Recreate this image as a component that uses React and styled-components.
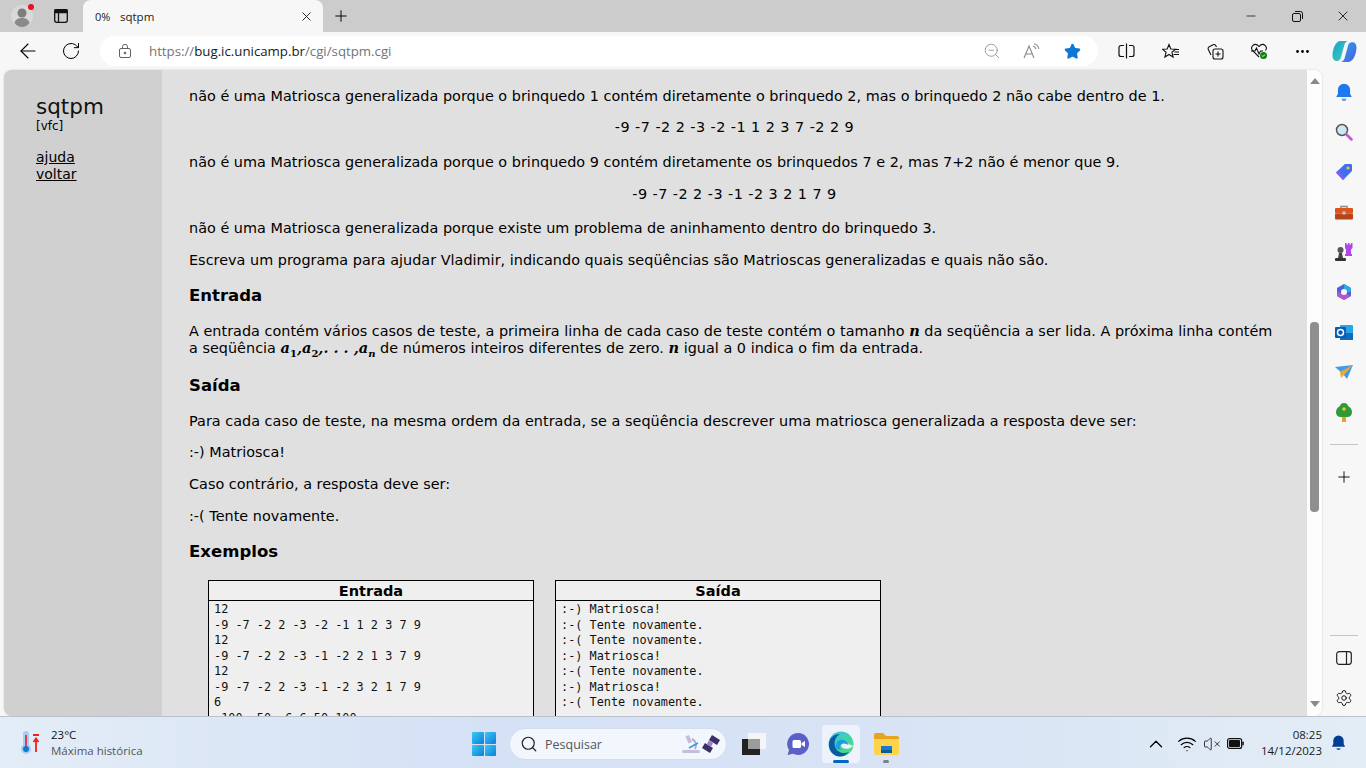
import React from "react";
import styled, { createGlobalStyle } from "styled-components";
import {
  ArrowLeft,
  RotateCw,
  Minus,
  X,
  Plus,
  ZoomOut,
  Star,
  MoreHorizontal,
  Search,
  ChevronUp,
  Wifi,
  VolumeX,
  Settings,
} from "lucide-react";

const GlobalStyle = createGlobalStyle`
  html, body {
    margin: 0;
    padding: 0;
    width: 1366px;
    height: 768px;
    overflow: hidden;
    background: #f7f7f7;
  }
  * { box-sizing: border-box; }
`;

const Screen = styled.div`
  width: 1366px;
  height: 768px;
  display: flex;
  flex-direction: column;
  font-family: "DejaVu Sans", Verdana, sans-serif;
  color: #000;
`;

const TitleBar = styled.div`
  height: 32px;
  flex: none;
  background: #cccccc;
  display: flex;
  align-items: flex-end;
  font-family: "Open Sans", "Noto Sans", sans-serif;
`;

const Avatar = styled.div`
  width: 44px;
  height: 32px;
  flex: none;
  position: relative;
  display: flex;
  align-items: center;
  padding-left: 11px;
`;

const RedDot = styled.span`
  position: absolute;
  top: 4px;
  left: 28px;
  width: 6px;
  height: 6px;
  border-radius: 50%;
  background: #e81123;
`;

const TabStrip = styled.div`
  width: 39px;
  height: 32px;
  flex: none;
  display: flex;
  align-items: center;
  padding-left: 9px;
`;

const Tab = styled.div`
  width: 240px;
  height: 32px;
  flex: none;
  background: #f7f7f7;
  border-radius: 8px 8px 0 0;
  display: flex;
  align-items: center;
  padding: 0 9px 0 12px;
  color: #222;
`;

const TabPercent = styled.span`
  width: 25px;
  font-size: 11px;
  flex: none;
`;

const TabTitle = styled.span`
  flex: 1;
  font-size: 11.5px;
`;

const NewTab = styled.div`
  width: 36px;
  height: 32px;
  display: flex;
  align-items: center;
  justify-content: center;
  flex: none;
`;

const WindowControls = styled.div`
  margin-left: auto;
  height: 32px;
  display: flex;
  align-items: center;
`;

const WindowButton = styled.div`
  width: 46px;
  height: 32px;
  display: flex;
  align-items: center;
  justify-content: center;
`;

const Toolbar = styled.div`
  height: 38px;
  flex: none;
  background: #f7f7f7;
  display: flex;
  align-items: center;
  padding-left: 10px;
  font-family: "Open Sans", "Noto Sans", sans-serif;
`;

const ToolButton = styled.div`
  width: ${(p) => p.$w || 44}px;
  height: 32px;
  flex: none;
  display: flex;
  align-items: center;
  justify-content: center;
`;

const AddressBar = styled.div`
  width: 998px;
  height: 30px;
  margin-left: 4px;
  margin-right: 5px;
  flex: none;
  background: #fff;
  border-radius: 15px;
  display: flex;
  align-items: center;
  padding-left: 18px;
  padding-right: 6px;
`;

const Url = styled.div`
  margin-left: 17px;
  flex: 1;
  font-size: 13.25px;
  color: #70757a;
  white-space: nowrap;
`;

const UrlHost = styled.span`
  color: #1a1a1a;
`;

const Body = styled.div`
  flex: 1;
  min-height: 0;
  display: flex;
  background: #f7f7f7;
`;

const Page = styled.div`
  width: 1318px;
  margin-left: 4px;
  flex: none;
  display: flex;
  overflow: hidden;
  border-radius: 8px;
  box-shadow: 0 0 2px rgba(0, 0, 0, 0.2);
`;

const Side = styled.nav`
  width: 158px;
  flex: none;
  background: #d0d0d0;
  padding: 24px 0 0 32px;
`;

const Brand = styled.div`
  font-size: 21.5px;
  line-height: 25px;
  color: #111;
`;

const Version = styled.div`
  font-size: 12px;
  line-height: 14px;
  margin-bottom: 16px;
`;

const SideLink = styled.a`
  display: block;
  color: #000;
  text-decoration: underline;
  font-size: 14px;
  line-height: 17px;
`;

const Main = styled.main`
  flex: 1;
  min-width: 0;
  background: #e0e0e0;
  padding: 17.5px 27px 0 27px;
  overflow: hidden;
  font-size: 14.4px;
  line-height: 17.3px;
  letter-spacing: 0.02px;
`;

const Para = styled.p`
  margin: 0 0 ${(p) => (p.$tall ? 16.4 : 14.4)}px;
`;

const Centered = styled.p`
  margin: 0 0 17.4px;
  text-align: center;
  letter-spacing: 0.45px;
`;

const Heading = styled.h3`
  margin: 0 0 16.6px;
  padding-top: 2.5px;
  font-size: 16.5px;
  line-height: 20px;
  font-weight: 700;
`;

const MathText = styled.span`
  font-family: "DejaVu Serif", "Liberation Serif", serif;
  font-style: italic;
  font-weight: 700;
  font-size: 14.5px;
  line-height: 0;
  letter-spacing: 0;
  sub {
    font-size: 10px;
    line-height: 0;
  }
`;

const DigitSub = styled.sub`
  font-style: normal;
`;

const Samples = styled.div`
  display: flex;
  gap: 21px;
  padding: 1.2px 0 0 19px;
  letter-spacing: 0;
`;

const SampleBox = styled.div`
  width: 326px;
  height: 200px;
  flex: none;
  border: 1px solid #000;
  background: #efefef;
`;

const SampleHead = styled.div`
  height: 20px;
  border-bottom: 1px solid #000;
  text-align: center;
  font-weight: 700;
  font-size: 14.5px;
  line-height: 20px;
`;

const SampleBody = styled.pre`
  margin: 0;
  padding: 1.5px 5px 0;
  font-family: "DejaVu Sans Mono", monospace;
  font-size: 11.85px;
  line-height: 15.5px;
  color: #111;
`;

const Scrollbar = styled.div`
  width: 15px;
  flex: none;
  background: #fdfdfd;
  display: flex;
  flex-direction: column;
  align-items: center;
  padding-top: 8px;
`;

const ArrowUp = styled.div`
  width: 0;
  height: 0;
  border-left: 5px solid transparent;
  border-right: 5px solid transparent;
  border-bottom: 6px solid #8a8a8a;
`;

const ArrowDown = styled.div`
  width: 0;
  height: 0;
  margin-top: 189px;
  border-left: 5px solid transparent;
  border-right: 5px solid transparent;
  border-top: 6px solid #8a8a8a;
`;

const Thumb = styled.div`
  width: 9px;
  height: 190px;
  margin-top: 238px;
  background: #8f8f8f;
  border-radius: 4px;
`;

const Rail = styled.aside`
  flex: 1;
  display: flex;
  flex-direction: column;
  align-items: center;
  padding-top: 2px;
`;

const RailSlot = styled.div`
  width: 100%;
  height: 40px;
  flex: none;
  display: flex;
  align-items: center;
  justify-content: center;
`;

const RailRule = styled.div`
  width: 28px;
  height: 1px;
  background: #c4c4c4;
  flex: none;
  margin-top: ${(p) => p.$top}px;
  margin-bottom: ${(p) => p.$bottom}px;
`;

const Taskbar = styled.footer`
  height: 52px;
  flex: none;
  background: linear-gradient(90deg, #e3edf7 0%, #d5e1f5 35%, #d8e3f5 65%, #e2edf6 100%);
  border-top: 1px solid #b9c2cc;
  display: flex;
  align-items: center;
  font-family: "Open Sans", "Noto Sans", sans-serif;
`;

const Weather = styled.div`
  width: 470px;
  flex: none;
  display: flex;
  align-items: center;
  padding-left: 20px;
  gap: 11px;
`;

const WeatherText = styled.div`
  font-size: 11.5px;
  line-height: 16px;
  color: #111;
`;

const WeatherSub = styled.div`
  color: #555;
`;

const Dock = styled.div`
  display: flex;
  align-items: center;
  padding-top: 3px;
`;

const StartIcon = styled.div`
  width: 24px;
  height: 24px;
  margin-left: 2px;
  flex: none;
  display: grid;
  grid-template-columns: 1fr 1fr;
  gap: 1px;
  span {
    background: linear-gradient(135deg, #3cc8f5, #0a7fd8);
    border-radius: 1px;
  }
`;

const SearchBox = styled.div`
  width: 218px;
  height: 32px;
  margin-left: 13px;
  flex: none;
  border-radius: 16px;
  background: #f2f6fd;
  border: 1px solid #d5dcea;
  display: flex;
  align-items: center;
  padding: 0 5px 0 10px;
  font-size: 12.5px;
  color: #555;
`;

const SearchLabel = styled.span`
  margin-left: 7px;
  flex: 1;
`;

const TaskApp = styled.div`
  width: 38px;
  height: 38px;
  flex: none;
  margin-left: ${(p) => p.$gap}px;
  border-radius: 4px;
  background: ${(p) => (p.$active ? "#eef3fb" : "transparent")};
  display: flex;
  align-items: center;
  justify-content: center;
  position: relative;
`;

const TaskMark = styled.span`
  position: absolute;
  bottom: 0;
  left: 50%;
  transform: translateX(-50%);
  width: ${(p) => (p.$active ? 16 : 6)}px;
  height: 3px;
  border-radius: 2px;
  background: ${(p) => (p.$active ? "#0067c0" : "#7a7f88")};
`;

const Tray = styled.div`
  margin-left: auto;
  display: flex;
  align-items: center;
  padding-right: 19px;
`;

const TrayIcon = styled.div`
  width: ${(p) => p.$w}px;
  padding-top: 2px;
  display: flex;
  align-items: center;
  justify-content: center;
  flex: none;
`;

const Clock = styled.div`
  margin: 1px 8px 0 11px;
  text-align: right;
  font-size: 11.5px;
  line-height: 16px;
  color: #1a1a1a;
`;

const entrada = `12
-9 -7 -2 2 -3 -2 -1 1 2 3 7 9
12
-9 -7 -2 2 -3 -1 -2 2 1 3 7 9
12
-9 -7 -2 2 -3 -1 -2 3 2 1 7 9
6
-100 -50 -6 6 50 100`;

const saida = `:-) Matriosca!
:-( Tente novamente.
:-( Tente novamente.
:-) Matriosca!
:-( Tente novamente.
:-) Matriosca!
:-( Tente novamente.`;

const PersonIcon = () => (
  <svg width="22" height="22" viewBox="0 0 22 22">
    <circle cx="11" cy="11" r="11" fill="#d9d9d9" />
    <circle cx="11" cy="8" r="4.5" fill="#7d7d7d" />
    <path d="M3.5 18c1-4 4-5 7.5-5s6.5 1 7.5 5c-2 2.5-4.5 4-7.5 4s-5.5-1.500-7.5-4z" fill="#8a8a8a" />
  </svg>
);

const VerticalTabsIcon = () => (
  <svg width="16" height="16" viewBox="0 0 16 16" fill="none" stroke="#111" strokeWidth="1.3">
    <rect x="1.7" y="1.7" width="12.6" height="12.6" rx="2" />
    <path d="M5.5 4.5V14" />
    <path d="M2 2h12v2.500H2z" fill="#111" />
  </svg>
);

const LockIcon = () => (
  <svg width="14" height="16" viewBox="0 0 14 16" fill="none" stroke="#5f6368" strokeWidth="1">
    <rect x="1.5" y="5.5" width="11" height="9" rx="1.5" />
    <path d="M4.5 5.5V3.800a2.500 2.500 0 0 1 5 0v1.700" />
    <circle cx="7" cy="10" r="0.9" fill="#5f6368" />
  </svg>
);

const ReadAloudIcon = () => (
  <svg width="18" height="16" viewBox="0 0 18 16" fill="none" stroke="#8a8a8a" strokeWidth="1.1">
    <path d="M1 15 6 3l5 12M2.800 11h6.400" />
    <path d="M10 3c1.500.5 2.500 1.500 3 3M11 .8c2.500.6 4.200 2.500 5 5" />
  </svg>
);

const SplitIcon = () => (
  <svg width="17" height="16" viewBox="0 0 17 16" fill="none" stroke="#111" strokeWidth="1.2">
    <path d="M6 2.500H3a2 2 0 0 0-2 2v7a2 2 0 0 0 2 2h3M11 2.500h3a2 2 0 0 1 2 2v7a2 2 0 0 1-2 2h-3M8.500 0.500v15" />
  </svg>
);

const FavoritesIcon = () => (
  <svg width="18" height="17" viewBox="0 0 18 17" fill="none" stroke="#111" strokeWidth="1.1">
    <path d="M7 1.500 8.800 6l4.700.3-3.600 3 1.200 4.700L7 11.500 2.900 14l1.200-4.700-3.600-3L5.200 6z" />
    <path d="M12 6.500h5M12.500 9h4.500M11.500 11.500h5.500" />
  </svg>
);

const CollectionsIcon = () => (
  <svg width="17" height="17" viewBox="0 0 17 17" fill="none" stroke="#111" strokeWidth="1.1">
    <path d="M4 12 1.300 6.500a2 2 0 0 1 1-2.700l3.800-2a2 2 0 0 1 2.600.7L9.500 4" />
    <rect x="6" y="6" width="10" height="10" rx="2" />
    <path d="M11 8.500v5M8.500 11h5" />
  </svg>
);

const HealthIcon = () => (
  <svg width="18" height="18" viewBox="0 0 18 18" fill="none">
    <path d="M9 15 2.500 8.500a3.700 3.700 0 0 1 5.200-5.200L9 4.500l1.300-1.200a3.700 3.700 0 0 1 5.200 5.200" stroke="#111" strokeWidth="1.1" />
    <path d="M1 9h4l1.500-3 2.500 6 1.500-3H13" stroke="#111" strokeWidth="1.1" />
    <circle cx="13.5" cy="13.5" r="3.5" fill="#107c10" />
    <path d="m12 13.500 1 1 2-2" stroke="#fff" strokeWidth="1" />
  </svg>
);

const CopilotIcon = () => (
  <svg width="25" height="25" viewBox="0 0 24 24">
    <defs>
      <linearGradient id="copA" x1="0" y1="0" x2="1" y2="1">
        <stop offset="0" stopColor="#1a9fe0" />
        <stop offset="1" stopColor="#3ad49a" />
      </linearGradient>
      <linearGradient id="copB" x1="0" y1="0" x2="1" y2="1">
        <stop offset="0" stopColor="#2aa4f0" />
        <stop offset="1" stopColor="#4c5fe0" />
      </linearGradient>
    </defs>
    <path d="M8 2h7c-2 1-3 2.500-3.500 5l-3 11c-.5 2-2 3-3.500 3H4c-2 0-3.500-2-3.500-5C.5 9 4 2 8 2z" fill="url(#copA)" />
    <path d="M16 22H9c2-1 3-2.500 3.500-5l3-11c.5-2 2-3 3.500-3h1c2 0 3.500 2 3.500 5 0 7-3.500 14-7.500 14z" fill="url(#copB)" />
  </svg>
);

const BellIcon = ({ fill, size = 18 }) => (
  <svg width={size} height={size} viewBox="0 0 18 18">
    <path d="M9 1.500a5.500 5.500 0 0 0-5.500 5.500v3.500L2 13.500h14l-1.500-3V7A5.500 5.500 0 0 0 9 1.500z" fill={fill} />
    <path d="M6.800 15h4.400a2.200 2 0 0 1-4.400 0z" fill={fill} opacity="0.8" />
  </svg>
);

const MagnifierIcon = () => (
  <svg width="18" height="18" viewBox="0 0 18 18">
    <circle cx="7" cy="7" r="5.5" fill="#cfe6f7" stroke="#555" strokeWidth="1.5" />
    <path d="m11 11 5.500 5.500" stroke="#c94fd8" strokeWidth="2.5" strokeLinecap="round" />
  </svg>
);

const TagIcon = () => (
  <svg width="18" height="18" viewBox="0 0 18 18">
    <path d="M10 1h6a1 1 0 0 1 1 1v6L8 17 1 9.500z" fill="#3f6ff0" />
    <path d="M8 17 1 9.500l3-2.500 6 8z" fill="#7a5ef0" />
    <circle cx="13" cy="5" r="1.6" fill="#f4c430" />
  </svg>
);

const ToolboxIcon = () => (
  <svg width="18" height="15" viewBox="0 0 18 15">
    <path d="M6 3V1.500h6V3" fill="none" stroke="#8a8a8a" strokeWidth="1.5" />
    <rect y="3" width="18" height="5.5" rx="1" fill="#d9541e" />
    <rect y="8.5" width="18" height="6" rx="1" fill="#b8421a" />
    <rect x="7.5" y="6.5" width="3" height="3" fill="#c9c9c9" />
  </svg>
);

const ChessIcon = () => (
  <svg width="20" height="20" viewBox="0 0 20 20">
    <circle cx="6.5" cy="8" r="3" fill="#555" />
    <path d="M5 11h3l1 5H4z" fill="#444" />
    <rect x="1" y="16" width="11" height="3" rx="1" fill="#333" />
    <path d="M11 1h1.500v1.500H14V1h1.500v1.500H17V1h1.500v5L17 7.500V12h1v2h-7v-2h1V7.500L11 6z" fill="#b145e8" />
  </svg>
);

const M365Icon = () => (
  <svg width="18" height="18" viewBox="0 0 18 18">
    <path d="M9 1 16 5v8l-7 4-7-4V5z" fill="#4a63d8" />
    <path d="M9 1 16 5v4H9z" fill="#2fa8e0" />
    <path d="M2 9v4l7 4 7-4-5-2z" fill="#b056d0" />
    <circle cx="9" cy="9" r="3" fill="#f7f7f7" />
  </svg>
);

const OutlookIcon = () => (
  <svg width="18" height="17" viewBox="0 0 18 17">
    <rect x="5" y="1" width="13" height="15" rx="1" fill="#2ba3e8" />
    <path d="M5 9h13v7H5z" fill="#0f6cbd" />
    <rect y="3" width="11" height="11" rx="1" fill="#0a5cb0" />
    <circle cx="5.5" cy="8.5" r="3" fill="none" stroke="#fff" strokeWidth="1.5" />
  </svg>
);

const SendIcon = () => (
  <svg width="18" height="14" viewBox="0 0 18 14">
    <path d="M0 2 18 0 12 14 8 9z" fill="#3f9be8" />
    <path d="M18 0 5 7l1 6 3-3z" fill="#f0a830" />
  </svg>
);

const TreeIcon = () => (
  <svg width="16" height="19" viewBox="0 0 16 19">
    <rect x="6" y="13" width="4" height="6" fill="#f0a020" />
    <path d="M8 0c3 0 4 2 4 3 2 1 4 3 4 6s-2 5-5 5H5c-3 0-5-2-5-5s2-5 4-6c0-1 1-3 4-3z" fill="#2f9a3a" />
    <circle cx="8" cy="6" r="1.8" fill="#f4c430" />
  </svg>
);

const SidePanelIcon = () => (
  <svg width="16" height="14" viewBox="0 0 16 14" fill="none" stroke="#222" strokeWidth="1.2">
    <rect x="0.7" y="0.7" width="14.6" height="12.6" rx="2.5" />
    <path d="M10.500 1v12" />
  </svg>
);

const ThermoIcon = () => (
  <svg width="20" height="24" viewBox="0 0 20 24">
    <path d="M3 3a3 3 0 0 1 6 0v11a5 5 0 1 1-6 0z" fill="#a8cdf5" />
    <rect x="5" y="4" width="2" height="12" fill="#e0404a" />
    <circle cx="6" cy="18" r="3" fill="#0f78d4" />
    <path d="M13 4h6M16 21V8M13.500 11 16 7.500l2.500 3.500" stroke="#f0201c" strokeWidth="1.8" fill="none" />
  </svg>
);

const MicroscopeIcon = () => (
  <svg width="20" height="20" viewBox="0 0 20 20" fill="none">
    <path d="M8 1 11 8 7.500 9.500l-3-7z" fill="#c7bcd9" />
    <path d="M11 5c4 2 5 6 3 10" stroke="#b8aacb" strokeWidth="2" />
    <rect x="1" y="16" width="18" height="3" rx="1.5" fill="#c7bcd9" />
    <path d="M8 14l9-5" stroke="#2f9de0" strokeWidth="1.5" />
  </svg>
);

const SatelliteIcon = () => (
  <svg width="20" height="20" viewBox="0 0 20 20">
    <path d="M11 1l8 5-3 5-8-5z" fill="#3c2f63" />
    <path d="M4 9l8 5-3 5-8-5z" fill="#3c2f63" />
    <path d="M8 6l4 3-2 4-4-3z" fill="#9c80c9" />
  </svg>
);

const TaskViewIcon = () => (
  <svg width="24" height="22" viewBox="0 0 24 22">
    <rect x="6" y="0" width="18" height="16" fill="#f5f5f5" />
    <rect x="0" y="6" width="18" height="16" fill="#222" />
    <rect x="6" y="6" width="12" height="10" fill="#9c9c9c" />
  </svg>
);

const MeetIcon = () => (
  <svg width="24" height="24" viewBox="0 0 24 24">
    <path d="M12 1a11 11 0 1 1-5 20.800L1.500 23 3 18A11 11 0 0 1 12 1z" fill="#5b5fc7" />
    <rect x="6.5" y="8" width="8.5" height="8" rx="1.5" fill="#fff" />
    <path d="m15.500 11 3.500-2v6l-3.500-2z" fill="#fff" />
  </svg>
);

const EdgeIcon = () => (
  <svg width="26" height="26" viewBox="0 0 26 26">
    <defs>
      <linearGradient id="edgeA" x1="0" y1="0" x2="1" y2="1">
        <stop offset="0" stopColor="#35c1f1" />
        <stop offset="1" stopColor="#50e06a" />
      </linearGradient>
    </defs>
    <circle cx="13" cy="13" r="12.5" fill="url(#edgeA)" />
    <path d="M1 12C2 6 7 3 12 3c-5 3-6 8-5 12 1 5 7 9 14 6-3 3-6 4.500-9 4.500C5 25.500 0 19 1 12z" fill="#0c59a4" />
    <path d="M25 15c-3 3-8 3.500-10 2-2-1-2.500-3-1-4.500 1.500-1.500 5-1 7 .5 1.500 1 3 1.500 4 2z" fill="#eef3fb" />
    <path d="M8 15c0-5 4-7 7-6 3 .5 5 3 5.500 5-3-2-6-2-8 0-1.500 1.500-1 4 1 5-3 0-5.500-1.500-5.500-4z" fill="#1b9de2" />
  </svg>
);

const FolderIcon = () => (
  <svg width="25" height="22" viewBox="0 0 25 22">
    <path d="M0 2a2 2 0 0 1 2-2h7l3 3h11a2 2 0 0 1 2 2v4H0z" fill="#e8a41c" />
    <path d="M0 6h25v14a2 2 0 0 1-2 2H2a2 2 0 0 1-2-2z" fill="#fcd34d" />
    <rect x="7" y="13" width="11" height="4" fill="#1a78c8" />
    <rect x="7" y="17" width="11" height="3" fill="#0e5aa0" />
  </svg>
);

const BatteryIcon = () => (
  <svg width="17" height="11" viewBox="0 0 17 11">
    <rect x="0.6" y="0.6" width="14" height="9.8" rx="2" fill="none" stroke="#111" strokeWidth="1.2" />
    <rect x="2" y="2" width="11" height="7" rx="1" fill="#111" />
    <rect x="15.3" y="3.5" width="1.5" height="4" rx="0.7" fill="#111" />
  </svg>
);

const railIcons = [
  <BellIcon key="bell" fill="#1e78f0" size={20} />,
  <MagnifierIcon key="magnifier" />,
  <TagIcon key="tag" />,
  <ToolboxIcon key="toolbox" />,
  <ChessIcon key="chess" />,
  <M365Icon key="m365" />,
  <OutlookIcon key="outlook" />,
  <SendIcon key="send" />,
  <TreeIcon key="tree" />,
];

export default function App() {
  return (
    <Screen>
      <GlobalStyle />
      <TitleBar>
        <Avatar>
          <PersonIcon />
          <RedDot />
        </Avatar>
        <TabStrip>
          <VerticalTabsIcon />
        </TabStrip>
        <Tab>
          <TabPercent>0%</TabPercent>
          <TabTitle>sqtpm</TabTitle>
          <X size={15} strokeWidth={1.5} />
        </Tab>
        <NewTab>
          <Plus size={18} strokeWidth={1.3} />
        </NewTab>
        <WindowControls>
          <WindowButton>
            <Minus size={14} strokeWidth={1.2} />
          </WindowButton>
          <WindowButton>
            <svg width="11" height="11" viewBox="0 0 11 11" fill="none" stroke="#111" strokeWidth="1">
              <rect x="0.5" y="2.5" width="8" height="8" rx="1.5" />
              <path d="M3 .5h5.500a2 2 0 0 1 2 2V8" />
            </svg>
          </WindowButton>
          <WindowButton>
            <X size={16} strokeWidth={1.2} />
          </WindowButton>
        </WindowControls>
      </TitleBar>

      <Toolbar>
        <ToolButton $w={36}>
          <ArrowLeft size={24} strokeWidth={1.1} />
        </ToolButton>
        <ToolButton $w={50}>
          <RotateCw size={20} strokeWidth={1.2} />
        </ToolButton>
        <AddressBar>
          <LockIcon />
          <Url>
            https://<UrlHost>bug.ic.unicamp.br</UrlHost>/cgi/sqtpm.cgi
          </Url>
          <ToolButton $w={40}>
            <ZoomOut size={18} strokeWidth={1.1} color="#8a8a8a" />
          </ToolButton>
          <ToolButton $w={40}>
            <ReadAloudIcon />
          </ToolButton>
          <ToolButton $w={40}>
            <Star size={17} fill="#0f78d4" color="#0f78d4" />
          </ToolButton>
        </AddressBar>
        <ToolButton $w={46}>
          <SplitIcon />
        </ToolButton>
        <ToolButton $w={44}>
          <FavoritesIcon />
        </ToolButton>
        <ToolButton $w={44}>
          <CollectionsIcon />
        </ToolButton>
        <ToolButton $w={44}>
          <HealthIcon />
        </ToolButton>
        <ToolButton $w={42}>
          <MoreHorizontal size={17} strokeWidth={2} />
        </ToolButton>
        <ToolButton $w={42}>
          <CopilotIcon />
        </ToolButton>
      </Toolbar>

      <Body>
        <Page>
          <Side>
            <Brand>sqtpm</Brand>
            <Version>[vfc]</Version>
            <SideLink>ajuda</SideLink>
            <SideLink>voltar</SideLink>
          </Side>
          <Main>
            <Para>
              não é uma Matriosca generalizada porque o brinquedo 1 contém diretamente o brinquedo 2, mas o brinquedo 2
              não cabe dentro de 1.
            </Para>
            <Centered>-9 -7 -2 2 -3 -2 -1 1 2 3 7 -2 2 9</Centered>
            <Para>
              não é uma Matriosca generalizada porque o brinquedo 9 contém diretamente os brinquedos 7 e 2, mas 7+2 não
              é menor que 9.
            </Para>
            <Centered>-9 -7 -2 2 -3 -1 -2 3 2 1 7 9</Centered>
            <Para>não é uma Matriosca generalizada porque existe um problema de aninhamento dentro do brinquedo 3.</Para>
            <Para>Escreva um programa para ajudar Vladimir, indicando quais seqüências são Matrioscas generalizadas e quais não são.</Para>
            <Heading>Entrada</Heading>
            <Para $tall>
              A entrada contém vários casos de teste, a primeira linha de cada caso de teste contém o tamanho{" "}
              <MathText>n</MathText> da seqüência a ser lida. A próxima linha contém a seqüência{" "}
              <MathText>
                a<DigitSub>1</DigitSub>,a<DigitSub>2</DigitSub>,. . . ,a<sub>n</sub>
              </MathText>{" "}
              de números inteiros diferentes de zero. <MathText>n</MathText> igual a 0 indica o fim da entrada.
            </Para>
            <Heading>Saída</Heading>
            <Para>Para cada caso de teste, na mesma ordem da entrada, se a seqüência descrever uma matriosca generalizada a resposta deve ser:</Para>
            <Para>:-) Matriosca!</Para>
            <Para>Caso contrário, a resposta deve ser:</Para>
            <Para>:-( Tente novamente.</Para>
            <Heading>Exemplos</Heading>
            <Samples>
              <SampleBox>
                <SampleHead>Entrada</SampleHead>
                <SampleBody>{entrada}</SampleBody>
              </SampleBox>
              <SampleBox>
                <SampleHead>Saída</SampleHead>
                <SampleBody>{saida}</SampleBody>
              </SampleBox>
            </Samples>
          </Main>
          <Scrollbar>
            <ArrowUp />
            <Thumb />
            <ArrowDown />
          </Scrollbar>
        </Page>
        <Rail>
          {railIcons.map((icon) => (
            <RailSlot key={icon.key}>{icon}</RailSlot>
          ))}
          <RailRule $top={12} $bottom={12} />
          <RailSlot>
            <Plus size={18} strokeWidth={1.2} />
          </RailSlot>
          <RailRule $top={138} $bottom={2} />
          <RailSlot>
            <SidePanelIcon />
          </RailSlot>
          <RailSlot>
            <Settings size={18} strokeWidth={1.2} />
          </RailSlot>
        </Rail>
      </Body>

      <Taskbar>
        <Weather>
          <ThermoIcon />
          <WeatherText>
            23°C
            <WeatherSub>Máxima histórica</WeatherSub>
          </WeatherText>
        </Weather>
        <Dock>
          <StartIcon>
            <span />
            <span />
            <span />
            <span />
          </StartIcon>
          <SearchBox>
            <Search size={18} strokeWidth={1.6} color="#222" />
            <SearchLabel>Pesquisar</SearchLabel>
            <MicroscopeIcon />
            <SatelliteIcon />
          </SearchBox>
          <TaskApp $gap={8}>
            <TaskViewIcon />
          </TaskApp>
          <TaskApp $gap={6}>
            <MeetIcon />
          </TaskApp>
          <TaskApp $gap={5} $active>
            <EdgeIcon />
            <TaskMark $active />
          </TaskApp>
          <TaskApp $gap={7}>
            <FolderIcon />
            <TaskMark />
          </TaskApp>
        </Dock>
        <Tray>
          <TrayIcon $w={32}>
            <ChevronUp size={22} strokeWidth={1.4} />
          </TrayIcon>
          <TrayIcon $w={30}>
            <Wifi size={20} strokeWidth={1.4} />
          </TrayIcon>
          <TrayIcon $w={20}>
            <VolumeX size={18} strokeWidth={1} />
          </TrayIcon>
          <TrayIcon $w={28}>
            <BatteryIcon />
          </TrayIcon>
          <Clock>
            08:25
            <br />
            14/12/2023
          </Clock>
          <BellIcon fill="#003e92" size={17} />
        </Tray>
      </Taskbar>
    </Screen>
  );
}
